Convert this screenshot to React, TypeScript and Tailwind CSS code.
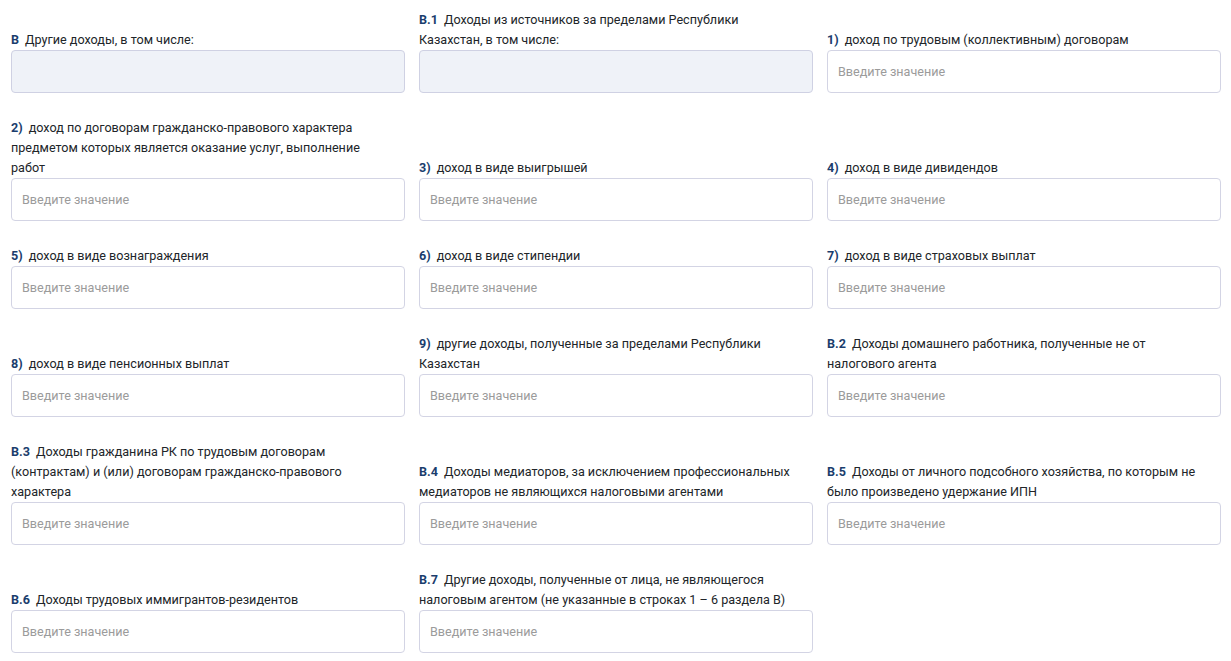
import React from 'react';

interface Field {
  code: string;
  lines: string[];
  disabled?: boolean;
}

// rows of three, label lines kept as in the form
const rows: Field[][] = [
  [
    { code: 'В', lines: ['Другие доходы, в том числе:'], disabled: true },
    { code: 'В.1', lines: ['Доходы из источников за пределами Республики', 'Казахстан, в том числе:'], disabled: true },
    { code: '1)', lines: ['доход по трудовым (коллективным) договорам'] },
  ],
  [
    {
      code: '2)',
      lines: [
        'доход по договорам гражданско-правового характера',
        'предметом которых является оказание услуг, выполнение',
        'работ',
      ],
    },
    { code: '3)', lines: ['доход в виде выигрышей'] },
    { code: '4)', lines: ['доход в виде дивидендов'] },
  ],
  [
    { code: '5)', lines: ['доход в виде вознаграждения'] },
    { code: '6)', lines: ['доход в виде стипендии'] },
    { code: '7)', lines: ['доход в виде страховых выплат'] },
  ],
  [
    { code: '8)', lines: ['доход в виде пенсионных выплат'] },
    { code: '9)', lines: ['другие доходы, полученные за пределами Республики', 'Казахстан'] },
    { code: 'В.2', lines: ['Доходы домашнего работника, полученные не от', 'налогового агента'] },
  ],
  [
    {
      code: 'В.3',
      lines: [
        'Доходы гражданина РК по трудовым договорам',
        '(контрактам) и (или) договорам гражданско-правового',
        'характера',
      ],
    },
    {
      code: 'В.4',
      lines: [
        'Доходы медиаторов, за исключением профессиональных',
        'медиаторов не являющихся налоговыми агентами',
      ],
    },
    {
      code: 'В.5',
      lines: ['Доходы от личного подсобного хозяйства, по которым не', 'было произведено удержание ИПН'],
    },
  ],
  [
    { code: 'В.6', lines: ['Доходы трудовых иммигрантов-резидентов'] },
    {
      code: 'В.7',
      lines: ['Другие доходы, полученные от лица, не являющегося', 'налоговым агентом (не указанные в строках 1 – 6 раздела В)'],
    },
  ],
];

const FieldBox: React.FC<{ field: Field }> = ({ field }) => (
  <div className="flex flex-col justify-end">
    <label className="block text-[12.6px] leading-5 text-[#212529]">
      {field.lines.map((line, i) => (
        <span key={i} className="block whitespace-nowrap">
          {i === 0 && <b className="mr-[6px] font-bold text-[#1b3d6d]">{field.code}</b>}
          {line}
        </span>
      ))}
    </label>
    {field.disabled ? (
      <div className="h-[43px] rounded-[4px] border border-[#cfd1e3] bg-[#eff2f8]" />
    ) : (
      <input
        type="text"
        placeholder="Введите значение"
        className="h-[43px] w-full rounded-[4px] border border-[#d3d4e4] bg-white px-[10px] text-[12.6px] text-[#212529] outline-none placeholder:text-[#9b9b9b]"
      />
    )}
  </div>
);

export default function App() {
  return (
    <div
      className="min-h-[661px] w-[1231px] bg-white pl-[11px] pr-[10px] pt-[10px]"
      style={{ fontFamily: 'Roboto, "Noto Sans", sans-serif' }}
    >
      <div className="flex flex-col gap-[25px]">
        {rows.map((row, r) => (
          <div key={r} className="grid grid-cols-3 gap-x-[14px]">
            {row.map((f) => (
              <FieldBox key={f.code} field={f} />
            ))}
          </div>
        ))}
      </div>
    </div>
  );
}
